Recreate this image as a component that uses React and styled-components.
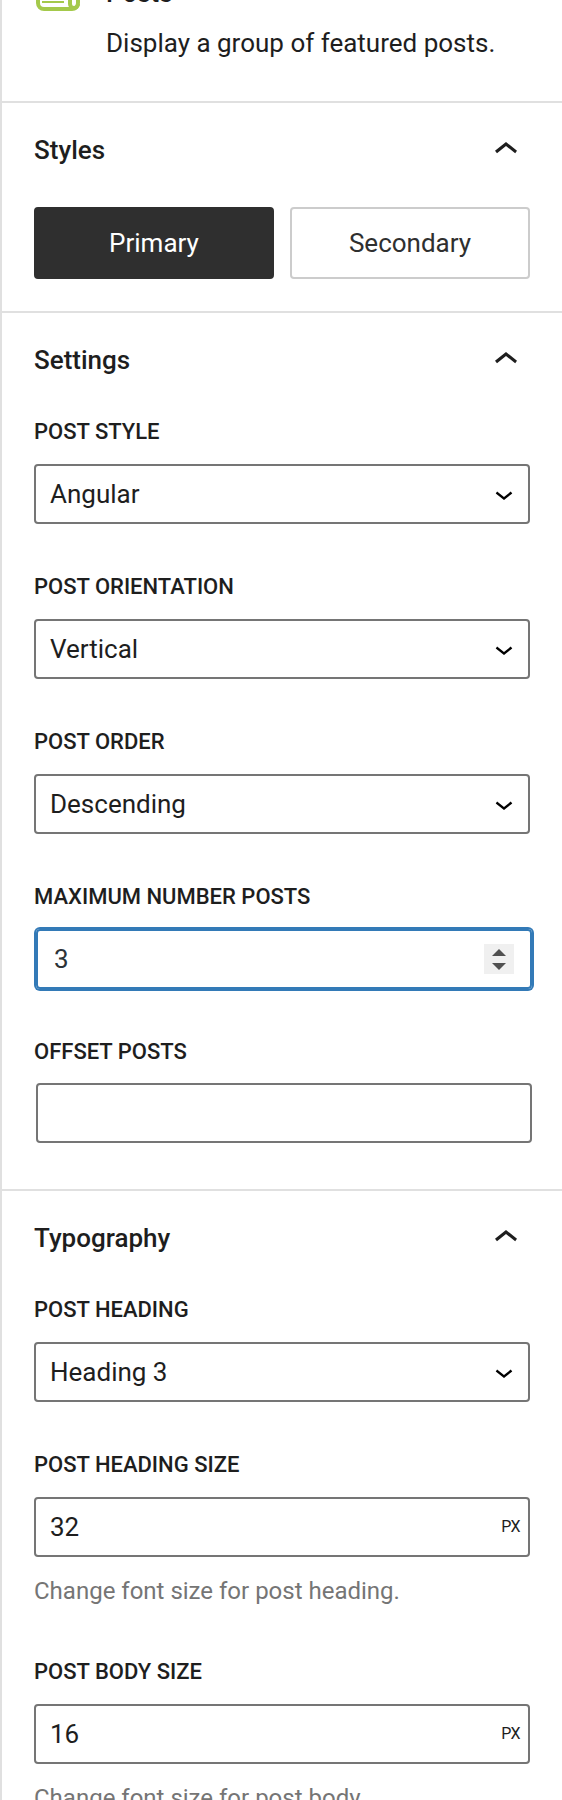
import { useState } from "react"
import styled, { createGlobalStyle } from "styled-components"

export default function App() {

  const [style, setStyle] = useState("Primary");

  return (
    <>
      <GlobalStyle />
      <Sidebar>
        <BlockCard>
          <PostsIcon />
          <div>
            <BlockTitle>Posts</BlockTitle>
            <BlockText>Display a group of featured posts.</BlockText>
          </div>
        </BlockCard>

        <Panel title="Styles">
          <StyleButtons>
            {["Primary", "Secondary"].map(name => (
              <StyleButton key={name} $active={style === name} onClick={() => setStyle(name)}>{name}</StyleButton>
            ))}
          </StyleButtons>
        </Panel>

        <Panel title="Settings">
          <SelectField label="Post Style" value="Angular" />
          <SelectField label="Post Orientation" value="Vertical" />
          <SelectField label="Post Order" value="Descending" />
          <Field>
            <Label>Maximum Number Posts</Label>
            <NumberBox $focused>
              <Value>3</Value>
              <Spinner>
                <svg width="14" height="22" viewBox="0 0 14 22" fill="#505050">
                  <path d="M7 1l7 7H0z" />
                  <path d="M0 15h14l-7 7z" />
                </svg>
              </Spinner>
            </NumberBox>
          </Field>
          <Field>
            <Label>Offset Posts</Label>
            <NumberBox />
          </Field>
        </Panel>

        <Panel title="Typography">
          <SelectField label="Post Heading" value="Heading 3" />
          <SizeField label="Post Heading Size" value="32" help="Change font size for post heading." />
          <SizeField label="Post Body Size" value="16" help="Change font size for post body." />
        </Panel>
      </Sidebar>
    </>
  )
}

function Panel({ title, children }) {
  return (
    <StyledPanel>
      <PanelHeader>
        <h2>{title}</h2>
        <svg width="48" height="48" viewBox="0 0 24 24" fill="#1e1e1e">
          <path d="M6.5 12.4L12 8l5.5 4.4-.9 1.2L12 10l-4.5 3.6-1-1.2z" />
        </svg>
      </PanelHeader>
      {children}
    </StyledPanel>
  )
}

function SelectField({ label, value }) {
  return (
    <Field>
      <Label>{label}</Label>
      <SelectBox>
        <Value>{value}</Value>
        <svg width="36" height="36" viewBox="0 0 24 24" fill="#000">
          <path d="M17.5 11.6L12 16l-5.5-4.4.9-1.2L12 14l4.5-3.6 1 1.2z" />
        </svg>
      </SelectBox>
    </Field>
  )
}

function SizeField({ label, value, help }) {
  return (
    <Field>
      <Label>{label}</Label>
      <SizeBox>
        <Value>{value}</Value>
        <Unit>px</Unit>
      </SizeBox>
      <Help>{help}</Help>
    </Field>
  )
}

function PostsIcon() {
  return (
    <IconSvg width="48" height="44" viewBox="0 0 48 44" fill="none" stroke="#a4c94b" strokeWidth="4">
      <path d="M36 4H4v31a6 6 0 0 0 6 6h28a6 6 0 0 0 6-6V14h-8" />
      <path d="M36 4v32a4 4 0 0 0 8 0" />
      <path d="M8 34h22M8 26h22" strokeWidth="2" />
    </IconSvg>
  )
}

const GlobalStyle = createGlobalStyle`
  body{
    margin: 0;
    background-color: #fff;
  }
`

const Sidebar = styled.div`
  box-sizing: border-box;
  height: 1800px;
  overflow: hidden;
  border-left: 2px solid #e0e0e0;
  color: #1e1e1e;
  font-family: Roboto, sans-serif;
  font-size: 26px;
  line-height: 36px;
`

const BlockCard = styled.div`
  display: flex;
  gap: 24px;
  height: 133px;
  margin-top: -32px;
  padding-left: 32px;
`

const IconSvg = styled.svg`
  flex-shrink: 0;
`

const BlockTitle = styled.h2`
  margin: 7px 0 0;
  font-size: 26px;
  font-weight: 500;
  line-height: 36px;
`

const BlockText = styled.p`
  margin: 14px 0 0;
`

const StyledPanel = styled.section`
  border-top: 2px solid #e0e0e0;
  padding: 0 32px 32px;
`

const PanelHeader = styled.div`
  display: flex;
  align-items: center;
  justify-content: space-between;
  height: 94px;
  margin-bottom: 10px;

  h2{
    margin: 0;
    font-size: 26px;
    font-weight: 500;
    line-height: 36px;
  }
`

const StyleButtons = styled.div`
  display: grid;
  grid-template-columns: 1fr 1fr;
  gap: 16px;
`

const StyleButton = styled.button`
  height: 72px;
  border: 2px solid ${props => props.$active ? "#2f2f2f" : "#ccc"};
  border-radius: 4px;
  background-color: ${props => props.$active ? "#2f2f2f" : "#fff"};
  color: ${props => props.$active ? "#fff" : "#2f2f2f"};
  font: 400 26px/36px Roboto, sans-serif;
`

const Field = styled.div`
  margin-bottom: 48px;

  &:last-child{
    margin-bottom: 14px;
  }
`

const Label = styled.div`
  margin-bottom: 18px;
  padding-top: 1px;
  font-size: 22px;
  font-weight: 500;
  line-height: 28px;
  text-transform: uppercase;
`

const SelectBox = styled.div`
  box-sizing: border-box;
  display: flex;
  align-items: center;
  justify-content: space-between;
  height: 60px;
  padding: 0 6px 0 14px;
  border: 2px solid #757575;
  border-radius: 4px;
`

const SizeBox = styled(SelectBox)`
  padding-right: 8px;
`

const NumberBox = styled(SelectBox)`
  margin: ${props => props.$focused ? "0" : "-1px"} -2px 0 2px;
  padding: 0 16px;
  border-color: ${props => props.$focused ? "#337ab7" : "#757575"};
  box-shadow: ${props => props.$focused ? "0 0 0 2px #337ab7" : "none"};
  color: #2c3338;
`

const Value = styled.span`
  white-space: nowrap;
`

const Spinner = styled.div`
  display: flex;
  align-items: center;
  justify-content: center;
  width: 30px;
  height: 30px;
  background-color: #f0f0f0;
`

const Unit = styled.span`
  font-size: 16px;
  letter-spacing: -0.6px;
  text-transform: uppercase;
`

const Help = styled.p`
  margin: 16px 0 0;
  color: #757575;
  font-size: 24px;
  line-height: 36px;
`
